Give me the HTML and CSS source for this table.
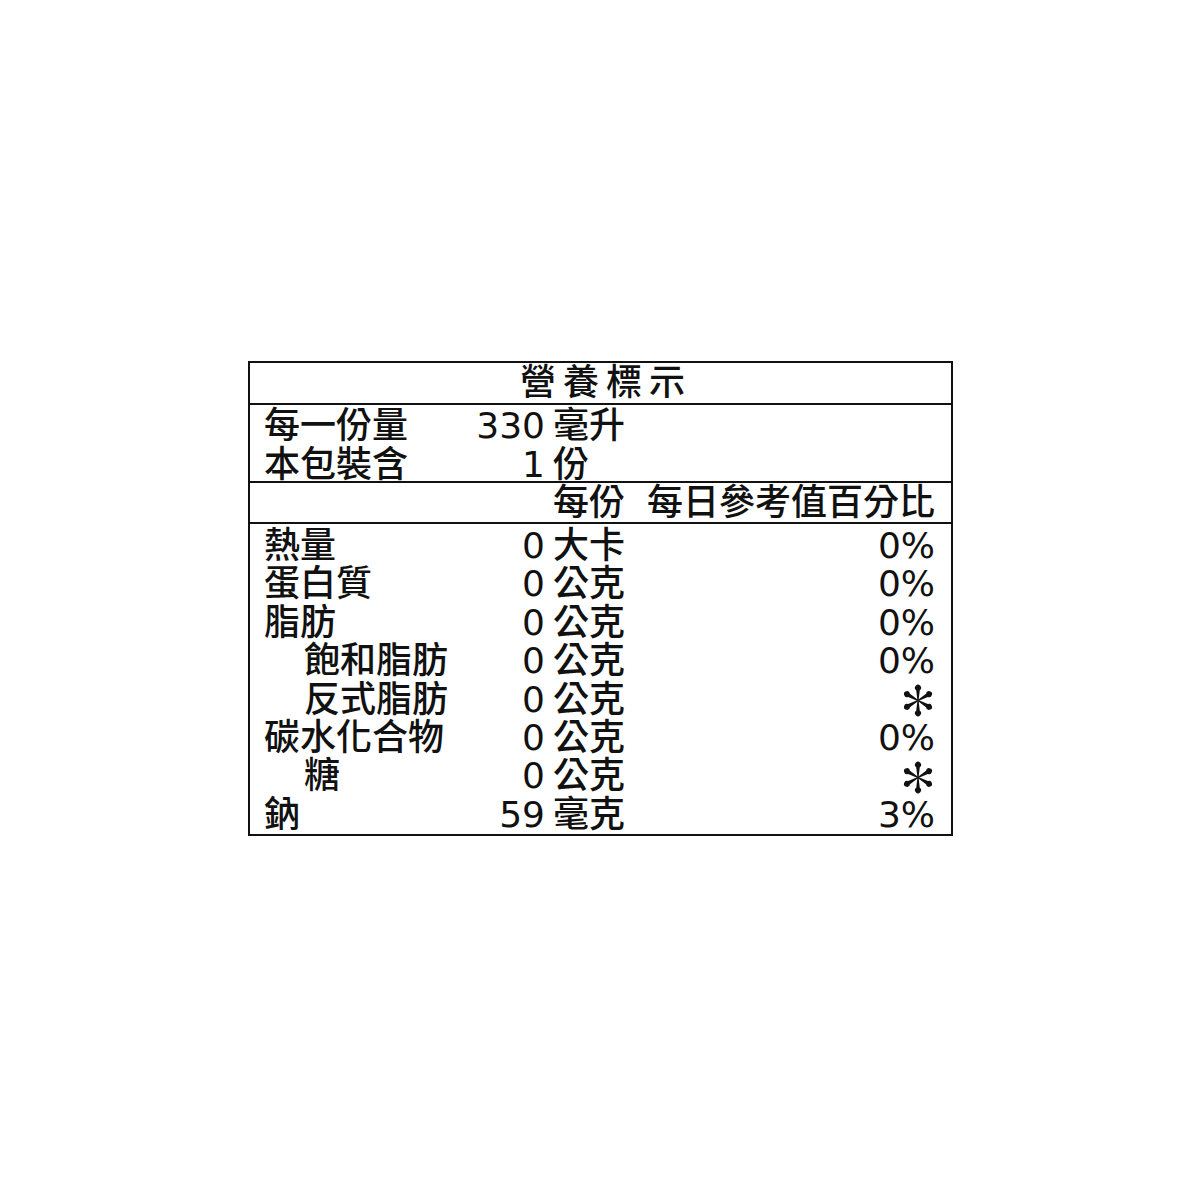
FILE: index.html
```html
<!DOCTYPE html>
<html lang="zh-Hant">
<head>
<meta charset="utf-8">
<title>營養標示</title>
<link rel="stylesheet" href="styles.css">
</head>
<body>
<svg class="defs" width="0" height="0" aria-hidden="true">
  <defs>
    <path id="spoke" d="M -0.6 0 L -1.9 -11 A 3.2 3.2 0 1 1 1.9 -11 L 0.6 0 Z"/>
    <g id="star">
      <use href="#spoke"/>
      <use href="#spoke" transform="rotate(60)"/>
      <use href="#spoke" transform="rotate(120)"/>
      <use href="#spoke" transform="rotate(180)"/>
      <use href="#spoke" transform="rotate(240)"/>
      <use href="#spoke" transform="rotate(300)"/>
    </g>
  </defs>
</svg>
<div class="page">
  <div class="label">
    <div class="title">營養標示</div>
    <div class="serving">
      <div class="row"><span class="name">每一份量</span><span class="num">330</span><span class="unit">毫升</span><span class="pct"></span></div>
      <div class="row"><span class="name">本包裝含</span><span class="num">1</span><span class="unit">份</span><span class="pct"></span></div>
    </div>
    <div class="head">
      <div class="row"><span class="name"></span><span class="num"></span><span class="unit">每份</span><span class="pct">每日參考值百分比</span></div>
    </div>
    <div class="nutrients">
      <div class="row"><span class="name">熱量</span><span class="num">0</span><span class="unit">大卡</span><span class="pct">0%</span></div>
      <div class="row"><span class="name">蛋白質</span><span class="num">0</span><span class="unit">公克</span><span class="pct">0%</span></div>
      <div class="row"><span class="name">脂肪</span><span class="num">0</span><span class="unit">公克</span><span class="pct">0%</span></div>
      <div class="row"><span class="name sub">飽和脂肪</span><span class="num">0</span><span class="unit">公克</span><span class="pct">0%</span></div>
      <div class="row"><span class="name sub">反式脂肪</span><span class="num">0</span><span class="unit">公克</span><span class="pct star"><svg class="ast" viewBox="-16 -17 32 34" width="30" height="33"><use href="#star"/></svg></span></div>
      <div class="row"><span class="name">碳水化合物</span><span class="num">0</span><span class="unit">公克</span><span class="pct">0%</span></div>
      <div class="row"><span class="name sub">糖</span><span class="num">0</span><span class="unit">公克</span><span class="pct star"><svg class="ast" viewBox="-16 -17 32 34" width="30" height="33"><use href="#star"/></svg></span></div>
      <div class="row"><span class="name">鈉</span><span class="num">59</span><span class="unit">毫克</span><span class="pct">3%</span></div>
    </div>
  </div>
</div>
</body>
</html>
```
FILE: styles.css
```css
html, body {
  margin: 0;
  padding: 0;
  background: #ffffff;
}

.defs {
  position: absolute;
  width: 0;
  height: 0;
  overflow: hidden;
}

.page {
  padding: 361px 0 0 248px;
}

.label {
  width: 705px;
  box-sizing: border-box;
  border: 2px solid #111111;
  color: #111111;
  font-family: "DejaVu Sans", "Noto Sans CJK TC", sans-serif;
  font-size: 36px;
  font-weight: 500;
}

.title {
  height: 40px;
  line-height: 40px;
  text-align: center;
  letter-spacing: 7px;
  padding-left: 11px;
  border-bottom: 2px solid #111111;
}

.serving {
  height: 78px;
  border-bottom: 2px solid #111111;
  box-sizing: border-box;
  padding-top: 1px;
}

.serving .row {
  height: 39px;
  line-height: 39px;
}

.head {
  height: 39px;
  border-bottom: 2px solid #111111;
}

.head .row {
  height: 39px;
  line-height: 39px;
}

.nutrients {
  height: 310px;
  box-sizing: border-box;
  padding-top: 3px;
}

.nutrients .row {
  height: 38.4px;
  line-height: 38.4px;
}

.row {
  display: grid;
  grid-template-columns: 200px 73px 72px 1fr;
  column-gap: 8px;
  padding: 0 16px 0 14px;
  white-space: nowrap;
}

.name.sub {
  padding-left: 40px;
}

.num {
  text-align: right;
}

.unit {
  text-align: left;
}

.pct {
  text-align: right;
}

.pct.star {
  display: flex;
  justify-content: flex-end;
  align-items: center;
}

.ast {
  display: block;
  fill: #111111;
  margin-right: 2px;
  margin-top: 2px;
}
```
